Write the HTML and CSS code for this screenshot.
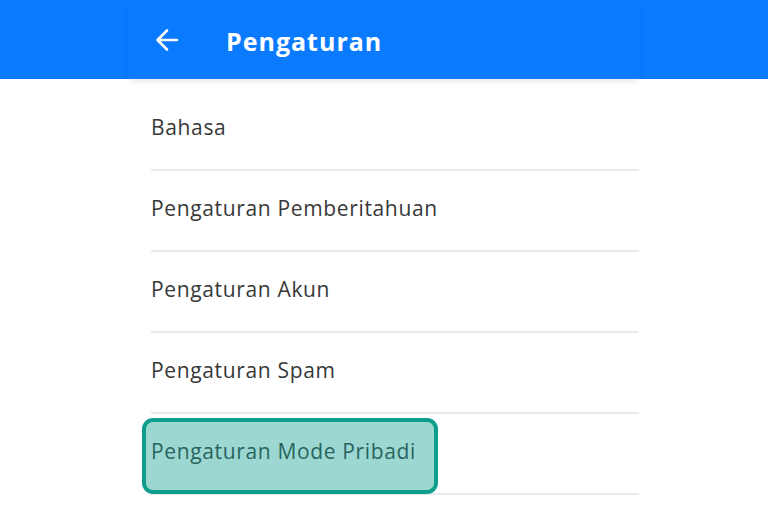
FILE: index.html
```html
<!DOCTYPE html>
<html lang="id">
<head>
<meta charset="utf-8">
<title>Pengaturan</title>
<link rel="stylesheet" href="styles.css">
</head>
<body>
<header class="appbar">
  <div class="appbar-inner">
    <svg class="back" width="24" height="24" viewBox="0 0 24 24" aria-hidden="true">
      <path d="M22 12H3M12 2.5L2.5 12 12 21.5" fill="none" stroke="#fff" stroke-width="2.6" stroke-linecap="round" stroke-linejoin="round"/>
    </svg>
    <h1 class="title">Pengaturan</h1>
  </div>
</header>
<main class="content">
  <ul class="menu">
    <li class="item">Bahasa</li>
    <li class="item">Pengaturan Pemberitahuan</li>
    <li class="item">Pengaturan Akun</li>
    <li class="item">Pengaturan Spam</li>
    <li class="item item-marked">Pengaturan Mode Pribadi<span class="mark"></span></li>
  </ul>
</main>
</body>
</html>
```
FILE: styles.css
```css
html, body {
  margin: 0;
  padding: 0;
  background: #ffffff;
  font-family: "Open Sans", "Lato", "DejaVu Sans", sans-serif;
  overflow: hidden;
}
.appbar {
  background: #0a7bff;
  height: 79px;
}
.appbar-inner {
  width: 510px;
  height: 79px;
  margin: 0 auto;
  display: flex;
  align-items: center;
  box-sizing: border-box;
  padding-left: 26px;
  box-shadow: 0 3px 5px rgba(0, 0, 0, 0.08);
}
.back {
  display: block;
  margin-top: 1px;
}
.title {
  margin: 2px 0 0 47px;
  color: #ffffff;
  font-size: 25px;
  font-weight: 700;
  letter-spacing: 1px;
}
.content {
  width: 510px;
  margin: 0 auto;
  padding-top: 11px;
}
.menu {
  list-style: none;
  margin: 0 0 0 22px;
  padding: 0;
}
.item {
  position: relative;
  height: 81px;
  box-sizing: border-box;
  border-bottom: 2px solid #e9e9e9;
  display: flex;
  align-items: center;
  padding-bottom: 6px;
  font-size: 21px;
  color: #383838;
  letter-spacing: 0.65px;
}
.mark {
  position: absolute;
  left: -9px;
  top: 4px;
  width: 296px;
  height: 76px;
  box-sizing: border-box;
  border: 4px solid #0f9d8e;
  border-radius: 11px;
  background: rgba(20, 160, 145, 0.42);
}
```
